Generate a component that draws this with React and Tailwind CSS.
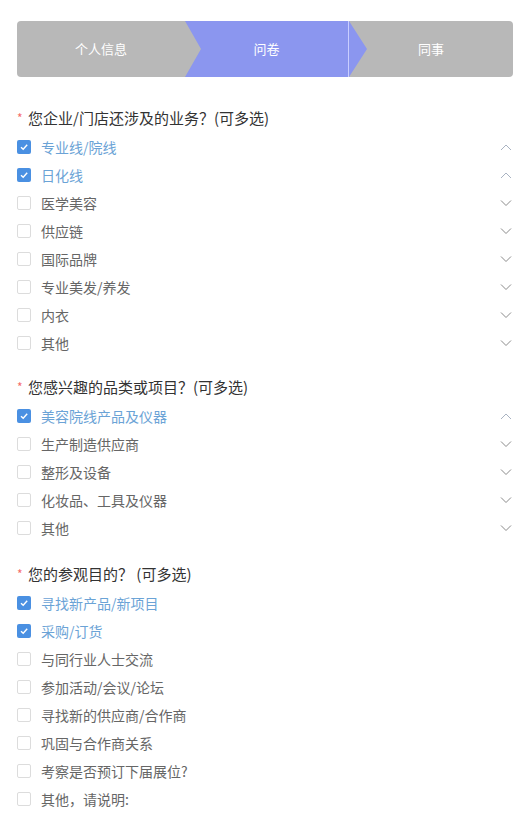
import React from "react";

const font = { fontFamily: '"Microsoft YaHei", "Noto Sans CJK SC", "Noto Sans", sans-serif' };

const sections = [
  {
    title: "您企业/门店还涉及的业务？(可多选)",
    chevron: true,
    mt: "mt-[26px]",
    options: [
      ["专业线/院线", true],
      ["日化线", true],
      ["医学美容", false],
      ["供应链", false],
      ["国际品牌", false],
      ["专业美发/养发", false],
      ["内衣", false],
      ["其他", false],
    ],
  },
  {
    title: "您感兴趣的品类或项目？(可多选)",
    chevron: true,
    mt: "mt-[15px]",
    options: [
      ["美容院线产品及仪器", true],
      ["生产制造供应商", false],
      ["整形及设备", false],
      ["化妆品、工具及仪器", false],
      ["其他", false],
    ],
  },
  {
    title: "您的参观目的？ (可多选)",
    chevron: false,
    mt: "mt-[17px]",
    options: [
      ["寻找新产品/新项目", true],
      ["采购/订货", true],
      ["与同行业人士交流", false],
      ["参加活动/会议/论坛", false],
      ["寻找新的供应商/合作商", false],
      ["巩固与合作商关系", false],
      ["考察是否预订下届展位?", false],
      ["其他，请说明:", false],
    ],
  },
];

function Chevron({ up }) {
  return (
    <svg width="12" height="8" viewBox="0 0 12 8" fill="none">
      {up ? (
        <path d="M1 7 L6 2 L11 7" stroke="#a9b3c2" strokeWidth="1" />
      ) : (
        <path d="M1 1.5 L6 6.5 L11 1.5" stroke="#8a8a8a" strokeWidth="1" />
      )}
    </svg>
  );
}

function Checkbox({ checked }) {
  if (checked) {
    return (
      <div className="w-[14px] h-[14px] rounded-[2px] bg-[#4a90e2] flex items-center justify-center shrink-0">
        <svg width="10" height="10" viewBox="0 0 10 10" fill="none">
          <path d="M2 5.2 L4.2 7.3 L8.2 2.8" stroke="#ffffff" strokeWidth="1.4" />
        </svg>
      </div>
    );
  }
  return <div className="w-[14px] h-[14px] rounded-[2px] border border-[#dcdcdc] bg-white shrink-0" />;
}

export default function App() {
  return (
    <div className="w-[529px] h-[830px] bg-white pl-[17px] pr-[16px] pt-[21px] overflow-hidden" style={font}>
      {/* stepper */}
      <div className="flex h-[56px] rounded-[4px] overflow-hidden bg-[#b8b8b8] text-white text-[13px]">
        <div className="w-[168px] shrink-0 flex items-center justify-center">个人信息</div>
        <div
          className="w-[182px] shrink-0 mr-[-18px] bg-[#8b96ef] flex relative z-10 [clip-path:polygon(0_0,calc(100%-18px)_0,100%_50%,calc(100%-18px)_100%,0_100%,16px_50%)]"
        >
          <div className="w-[164px] shrink-0 flex items-center justify-center border-r border-[#c9ceff]">问卷</div>
        </div>
        <div className="flex-1 flex items-center justify-center">同事</div>
      </div>

      {sections.map((s, si) => (
        <div key={si} className={s.mt}>
          <div className="h-[30px] flex items-center text-[15px] text-[#333333]">
            <span className="text-[#f56c6c] text-[12px] w-[11px] self-start mt-[6px]">*</span>
            <span>{s.title}</span>
          </div>
          {s.options.map(([label, checked], i) => (
            <div key={i} className="h-[28px] flex items-center">
              <Checkbox checked={checked} />
              <span className={`ml-[10px] text-[14px] ${checked ? "text-[#6ba3d6]" : "text-[#666666]"}`}>
                {label}
              </span>
              {s.chevron && (
                <div className="ml-auto mr-[1px] flex items-center">
                  <Chevron up={checked} />
                </div>
              )}
            </div>
          ))}
        </div>
      ))}
    </div>
  );
}
